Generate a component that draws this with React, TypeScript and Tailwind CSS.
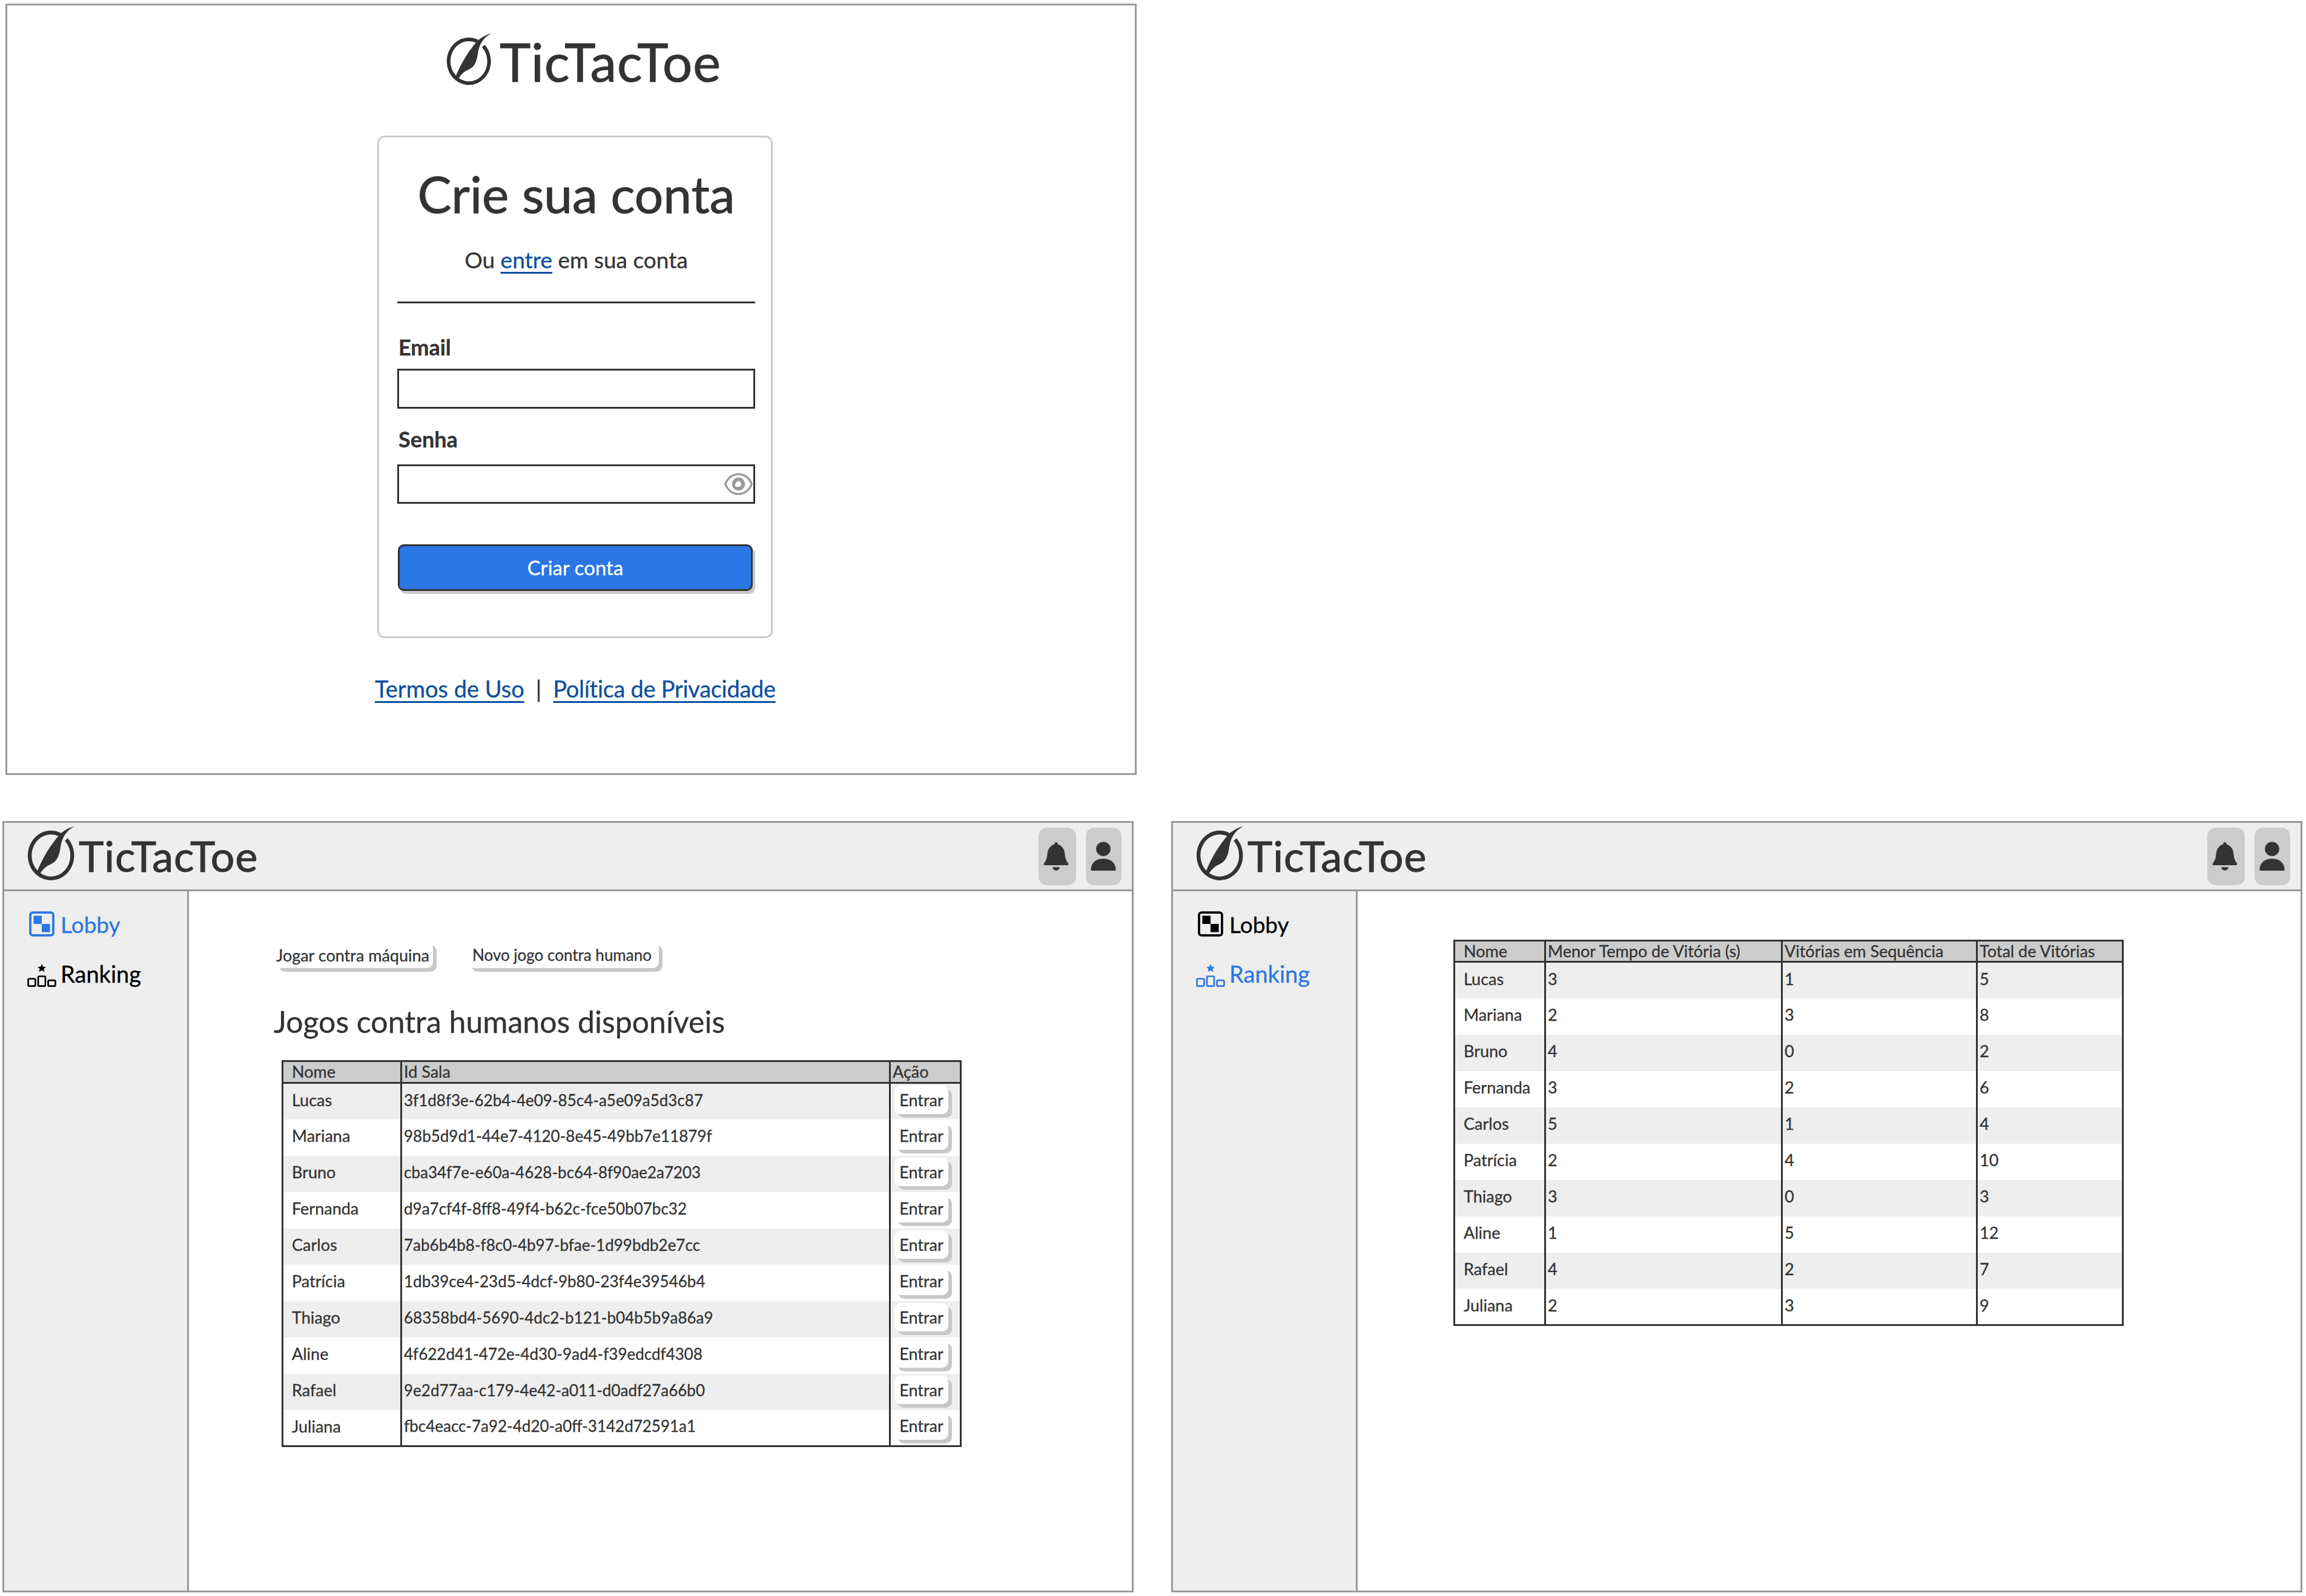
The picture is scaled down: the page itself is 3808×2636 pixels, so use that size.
import type { ReactNode } from 'react'

const games = [
  ['Lucas', '3f1d8f3e-62b4-4e09-85c4-a5e09a5d3c87'],
  ['Mariana', '98b5d9d1-44e7-4120-8e45-49bb7e11879f'],
  ['Bruno', 'cba34f7e-e60a-4628-bc64-8f90ae2a7203'],
  ['Fernanda', 'd9a7cf4f-8ff8-49f4-b62c-fce50b07bc32'],
  ['Carlos', '7ab6b4b8-f8c0-4b97-bfae-1d99bdb2e7cc'],
  ['Patrícia', '1db39ce4-23d5-4dcf-9b80-23f4e39546b4'],
  ['Thiago', '68358bd4-5690-4dc2-b121-b04b5b9a86a9'],
  ['Aline', '4f622d41-472e-4d30-9ad4-f39edcdf4308'],
  ['Rafael', '9e2d77aa-c179-4e42-a011-d0adf27a66b0'],
  ['Juliana', 'fbc4eacc-7a92-4d20-a0ff-3142d72591a1'],
]

const ranking = [
  ['Lucas', '3', '1', '5'],
  ['Mariana', '2', '3', '8'],
  ['Bruno', '4', '0', '2'],
  ['Fernanda', '3', '2', '6'],
  ['Carlos', '5', '1', '4'],
  ['Patrícia', '2', '4', '10'],
  ['Thiago', '3', '0', '3'],
  ['Aline', '1', '5', '12'],
  ['Rafael', '4', '2', '7'],
  ['Juliana', '2', '3', '9'],
]

function LogoMark({ className }: { className: string }) {
  return (
    <svg viewBox="150 70 245 275" className={className}>
      <path d="M345 145 A100 108 0 1 1 315 122" fill="none" stroke="#333333" strokeWidth="18" />
      <path
        d="M385 82 C350 100 325 130 318 180 C312 225 300 250 270 262 C250 270 235 285 222 305 L208 295 C235 230 270 170 320 115 C340 100 360 88 385 82 Z"
        fill="#333333"
      />
    </svg>
  )
}

function LobbyIcon({ color }: { color: string }) {
  return (
    <svg viewBox="0 0 124 124" className="w-[42px] h-[42px] shrink-0">
      <rect x="6" y="6" width="112" height="112" rx="12" fill="none" stroke={color} strokeWidth="11" />
      <rect x="22" y="22" width="40" height="40" fill={color} />
      <rect x="62" y="62" width="40" height="40" fill={color} />
    </svg>
  )
}

function RankingIcon({ color }: { color: string }) {
  return (
    <svg viewBox="0 0 144 115" className="w-[48px] h-[38px] shrink-0">
      <path d="M72 0 L78 14 L93 15 L82 25 L86 40 L72 32 L58 40 L62 25 L51 15 L66 14 Z" fill={color} />
      <rect x="4" y="74" width="36" height="37" rx="6" fill="none" stroke={color} strokeWidth="8" />
      <rect x="54" y="62" width="36" height="49" rx="6" fill="none" stroke={color} strokeWidth="8" />
      <rect x="104" y="82" width="36" height="29" rx="6" fill="none" stroke={color} strokeWidth="8" />
    </svg>
  )
}

function BellIcon() {
  return (
    <svg viewBox="0 0 128 148" className="w-[42px] h-[49px]">
      <path
        d="M64 2 C58 2 56 7 56 12 C35 18 22 38 20 60 C19 85 10 100 3 108 C0 112 2 118 8 118 L120 118 C126 118 128 112 125 108 C118 100 109 85 108 60 C106 38 93 18 72 12 C72 7 70 2 64 2 Z"
        fill="#333333"
      />
      <path d="M46 128 L82 128 C80 150 48 150 46 128 Z" fill="#333333" />
    </svg>
  )
}

function PersonIcon() {
  return (
    <svg viewBox="0 0 128 146" className="w-[42px] h-[48px]">
      <circle cx="64" cy="37" r="36" fill="#333333" />
      <path d="M1 138 C4 104 30 86 64 86 C98 86 124 104 127 138 C127 143 125 146 120 146 L8 146 C3 146 1 143 1 138 Z" fill="#333333" />
    </svg>
  )
}

function EyeIcon() {
  return (
    <svg viewBox="0 0 140 110" className="w-[47px] h-[37px]">
      <path d="M5 55 C30 -10 110 -10 135 55 C110 120 30 120 5 55 Z" fill="none" stroke="#999999" strokeWidth="10" />
      <circle cx="70" cy="55" r="23" fill="none" stroke="#999999" strokeWidth="18" />
      <circle cx="62" cy="60" r="9" fill="#ffffff" />
    </svg>
  )
}

function Shell({ active, children }: { active: 'lobby' | 'ranking'; children: ReactNode }) {
  const blue = '#2b76e5'
  return (
    <div className="w-[1868px] h-[1274px] border-[3px] border-[#999999] flex flex-col">
      <header className="h-[113px] shrink-0 bg-[#eeeeee] border-b-[3px] border-[#999999] flex items-center pl-[34px] pr-[17px]">
        <LogoMark className="w-[86px] h-[97px] -mt-[12px]" />
        <span className="ml-[3px] text-[70px] leading-none text-[#333333] tracking-[1px] -mt-[2px] [-webkit-text-stroke:1px_#333333]">TicTacToe</span>
        <div className="ml-auto flex gap-[16px]">
          <div className="w-[62px] h-[95px] bg-[#cccccc] rounded-[14px] flex items-center justify-center pr-[4px]">
            <BellIcon />
          </div>
          <div className="w-[59px] h-[95px] bg-[#cccccc] rounded-[14px] flex items-center justify-center pr-[2px]">
            <PersonIcon />
          </div>
        </div>
      </header>
      <div className="flex flex-1 min-h-0">
        <aside className="w-[305px] shrink-0 bg-[#eeeeee] border-r-[3px] border-[#999999] pt-[33px] pl-[38px] flex flex-col">
          <div className={`flex items-center gap-[10px] pl-[3px] h-[42px] text-[37px] ${active === 'lobby' ? 'text-[#2b76e5]' : 'text-black'}`}>
            <LobbyIcon color={active === 'lobby' ? blue : '#000000'} />
            <span className="leading-none">Lobby</span>
          </div>
          <div className={`flex items-center gap-[7px] mt-[43px] h-[42px] text-[38px] ${active === 'ranking' ? 'text-[#2b76e5]' : 'text-black'}`}>
            <RankingIcon color={active === 'ranking' ? blue : '#000000'} />
            <span className="leading-none -mt-[6px]">Ranking</span>
          </div>
        </aside>
        <main className="flex-1 min-w-0">{children}</main>
      </div>
    </div>
  )
}

function SoftButton({ children, className }: { children: ReactNode; className: string }) {
  return (
    <button className={`bg-white rounded-[10px] shadow-[6px_6px_0_#c8c8c8] text-[#333333] text-center leading-none ${className}`}>
      {children}
    </button>
  )
}

function Login() {
  return (
    <div className="w-[1868px] h-[1274px] border-[3px] border-[#999999] flex flex-col items-start">
      <div className="flex items-start ml-[721px] mt-[42px]">
        <LogoMark className="w-[82px] h-[92px]" />
        <span className="ml-[10px] mt-[3px] text-[87px] leading-[96px] text-[#333333] tracking-[1px] [-webkit-text-stroke:1px_#333333]">TicTacToe</span>
      </div>
      <div className="ml-[611px] mt-[74px] w-[653px] h-[830px] border-[3px] border-[#cccccc] rounded-[12px] pl-[30px] pr-[26px] flex flex-col">
        <h1 className="mt-[48px] text-center text-[84px] leading-[90px] text-[#333333] [-webkit-text-stroke:1px_#333333]">Crie sua conta</h1>
        <p className="mt-[42px] text-center text-[37px] leading-[44px] text-[#333333]">
          Ou <span className="text-[#0b4f9e] underline underline-offset-[6px]">entre</span> em sua conta
        </p>
        <div className="mt-[47px] h-[3px] bg-[#333333]" />
        <label className="mt-[52px] pl-[2px] text-[36px] leading-[40px] font-bold text-[#333333]">Email</label>
        <div className="mt-[16px] h-[66px] border-[3px] border-[#333333]" />
        <label className="mt-[30px] pl-[2px] text-[36px] leading-[40px] font-bold text-[#333333]">Senha</label>
        <div className="mt-[22px] h-[65px] border-[3px] border-[#333333] flex items-center justify-end pr-[1px]">
          <EyeIcon />
        </div>
        <button className="mt-[68px] w-[586px] h-[77px] ml-[1px] bg-[#2b76e5] border-[3px] border-[#333333] rounded-[10px] shadow-[4px_5px_0_#c8c8c8] text-white text-[33px] leading-none -translate-y-[1px]">
          Criar conta
        </button>
      </div>
      <div className="ml-[607px] mt-[60px] flex items-center text-[38px] leading-[46px] text-[#0b4f9e]">
        <span className="underline underline-offset-[6px]">Termos de Uso</span>
        <span className="mx-[19px] text-[#333333]">|</span>
        <span className="underline underline-offset-[6px] tracking-[-0.3px]">Política de Privacidade</span>
      </div>
    </div>
  )
}

function LobbyPage() {
  return (
    <div className="pt-[83px] pl-[143px]">
      <div className="flex gap-[58px]">
        <SoftButton className="w-[260px] h-[44px] text-[27px] pr-[5px]">Jogar contra máquina</SoftButton>
        <SoftButton className="w-[315px] h-[44px] text-[26px] pr-[5px]">Novo jogo contra humano</SoftButton>
      </div>
      <h2 className="mt-[58px] -ml-[3px] text-[50px] leading-[60px] text-[#333333]">Jogos contra humanos disponíveis</h2>
      <table className="mt-[34px] ml-[10px] w-[1120px] table-fixed border-collapse border-[3px] border-[#333333] text-[27px] text-[#333333]">
        <colgroup>
          <col className="w-[196px]" />
          <col className="w-[807px]" />
          <col className="w-[117px]" />
        </colgroup>
        <thead>
          <tr className="h-[36px] bg-[#cccccc] border-b-[3px] border-[#333333] leading-none">
            <th className="font-normal text-left pl-[14px] pb-[2px] border-r-[3px] border-[#333333]">Nome</th>
            <th className="font-normal text-left pl-[3px] pb-[2px] border-r-[3px] border-[#333333]">Id Sala</th>
            <th className="font-normal text-left pl-[3px] pb-[2px]">Ação</th>
          </tr>
        </thead>
        <tbody>
          {games.map(([name, id], i) => (
            <tr key={id} className={`h-[60px] ${i % 2 === 0 ? 'bg-[#eeeeee]' : 'bg-white'}`}>
              <td className="pl-[14px] pb-[4px] border-r-[3px] border-[#333333]">{name}</td>
              <td className="pl-[3px] pb-[4px] text-[26px] border-r-[3px] border-[#333333]">{id}</td>
              <td className="pl-[6px] pb-[6px]">
                <SoftButton className="block w-[89px] h-[47px]">Entrar</SoftButton>
              </td>
            </tr>
          ))}
        </tbody>
      </table>
    </div>
  )
}

function RankingPage() {
  return (
    <div className="pt-[80px] pl-[158px]">
      <table className="w-[1104px] table-fixed border-collapse border-[3px] border-[#333333] text-[27px] text-[#333333]">
        <colgroup>
          <col className="w-[150px]" />
          <col className="w-[391px]" />
          <col className="w-[322px]" />
          <col className="w-[241px]" />
        </colgroup>
        <thead>
          <tr className="h-[35px] bg-[#cccccc] border-b-[3px] border-[#333333] leading-none">
            <th className="font-normal text-left pl-[14px] pb-[2px] border-r-[3px] border-[#333333]">Nome</th>
            <th className="font-normal text-left pl-[3px] pb-[2px] border-r-[3px] border-[#333333]">Menor Tempo de Vitória (s)</th>
            <th className="font-normal text-left pl-[3px] pb-[2px] border-r-[3px] border-[#333333]">Vitórias em Sequência</th>
            <th className="font-normal text-left pl-[3px] pb-[2px]">Total de Vitórias</th>
          </tr>
        </thead>
        <tbody>
          {ranking.map((row, i) => (
            <tr key={row[0]} className={`h-[60px] ${i % 2 === 0 ? 'bg-[#eeeeee]' : 'bg-white'}`}>
              <td className="pl-[14px] pb-[4px] border-r-[3px] border-[#333333]">{row[0]}</td>
              <td className="pl-[3px] pb-[4px] border-r-[3px] border-[#333333]">{row[1]}</td>
              <td className="pl-[3px] pb-[4px] border-r-[3px] border-[#333333]">{row[2]}</td>
              <td className="pl-[3px] pb-[4px]">{row[3]}</td>
            </tr>
          ))}
        </tbody>
      </table>
    </div>
  )
}

export default function App() {
  return (
    <div className="w-[3808px] h-[2636px] bg-white overflow-hidden [font-family:Lato,'Noto_Sans',sans-serif] [-webkit-text-stroke:0.3px]">
      <div className="pl-[9px] pt-[6px]">
        <Login />
      </div>
      <div className="mt-[76px] pl-[4px] flex gap-[62px]">
        <Shell active="lobby">
          <LobbyPage />
        </Shell>
        <Shell active="ranking">
          <RankingPage />
        </Shell>
      </div>
    </div>
  )
}
